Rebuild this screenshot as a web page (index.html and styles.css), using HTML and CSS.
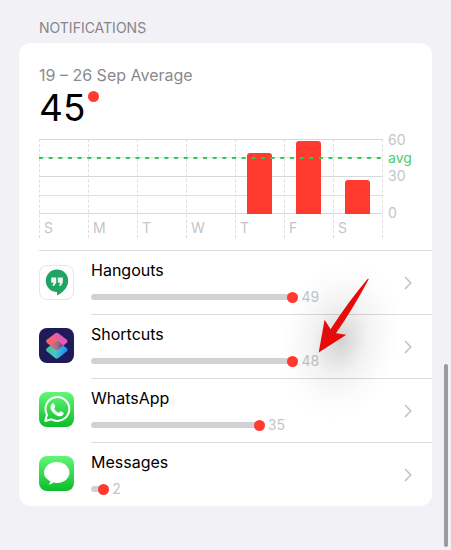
FILE: index.html
```html
<!DOCTYPE html>
<html lang="en">
<head>
    <meta charset="UTF-8">
    <meta name="viewport" content="width=device-width, initial-scale=1.0">
    <title>Notifications</title>
    <link rel="stylesheet" href="styles.css">
</head>
<body>
    <main class="page">
        <h2 class="section-title">NOTIFICATIONS</h2>
        <section class="card">
            <div class="summary">
                <p class="period">19 – 26 Sep Average</p>
                <p class="average">45<span class="dot"></span></p>
                <div class="chart">
                    <div class="plot">
                        <div class="day"><div class="bar-area"></div><span>S</span></div>
                        <div class="day"><div class="bar-area"></div><span>M</span></div>
                        <div class="day"><div class="bar-area"></div><span>T</span></div>
                        <div class="day"><div class="bar-area"></div><span>W</span></div>
                        <div class="day"><div class="bar-area"><div class="bar" style="height: 82%"></div></div><span>T</span></div>
                        <div class="day"><div class="bar-area"><div class="bar" style="height: 97%"></div></div><span>F</span></div>
                        <div class="day"><div class="bar-area"><div class="bar" style="height: 46%"></div></div><span>S</span></div>
                        <svg class="avg-line"><line x1="0" y1="1" x2="100%" y2="1" stroke="#34c759" stroke-width="2" stroke-dasharray="4 5.65"/></svg>
                    </div>
                    <div class="axis">
                        <span>60</span>
                        <span class="avg">avg</span>
                        <span>30</span>
                        <span class="zero">0</span>
                    </div>
                </div>
            </div>

            <div class="apps">
                <a class="app" href="#">
                    <svg class="icon" viewBox="0 0 35 35">
                        <rect x=".5" y=".5" width="34" height="34" rx="7.5" fill="#fff" stroke="#e6e6e8"/>
                        <path d="M18 4.5a11.2 11.2 0 0 1 11.2 11.3C29.2 22 24.5 27.5 18 30.500V27A11.25 11.25 0 0 1 18 4.500Z" fill="#1fa463"/>
                        <path d="M12.200 12.500h5v5.200l-2 3h-2l1.500-3h-2.500zM18.800 12.500h5v5.200l-2 3h-2l1.500-3h-2.500z" fill="#eef5f0"/>
                    </svg>
                    <div class="details">
                        <div class="info">
                            <span class="name">Hangouts</span>
                            <div class="usage"><div class="track" style="width: 68%"></div><span>49</span></div>
                        </div>
                        <svg class="chevron" viewBox="0 0 8 14"><path d="M1.500 1.500 6.800 7l-5.300 5.500"/></svg>
                    </div>
                </a>
                <a class="app" href="#">
                    <svg class="icon" viewBox="0 0 35 35">
                        <defs>
                            <linearGradient id="pink" x1="0" y1=".8" x2="1" y2=".2">
                                <stop offset="0" stop-color="#ff6450"/>
                                <stop offset=".45" stop-color="#f8617f"/>
                                <stop offset="1" stop-color="#c65ae0"/>
                            </linearGradient>
                            <linearGradient id="blue" x1="0" y1=".4" x2="1" y2=".6">
                                <stop offset="0" stop-color="#3fc08a"/>
                                <stop offset=".45" stop-color="#48c9c4"/>
                                <stop offset="1" stop-color="#1f84fb"/>
                            </linearGradient>
                            <linearGradient id="overlap" x1="0" y1="0" x2="1" y2="0">
                                <stop offset="0" stop-color="#ee6560"/>
                                <stop offset=".5" stop-color="#a0708f"/>
                                <stop offset="1" stop-color="#4a4a9c"/>
                            </linearGradient>
                        </defs>
                        <rect width="35" height="35" rx="8" fill="#1e1b58"/>
                        <path d="M16 13.700q1.800-1 3.600 0l8.200 6.600q1.700 1.500 0 3l-8.200 6.700q-1.800 1.300-3.600 0l-8.200-6.700q-1.700-1.500 0-3z" fill="url(#blue)"/>
                        <path d="M16 5.500q1.800-1.300 3.600 0l8.200 6.300q1.700 1.500 0 3l-8.200 6.700q-1.800 1.300-3.600 0l-8.200-6.700q-1.700-1.500 0-3z" fill="url(#pink)"/>
                        <path d="M16 13.700q1.800-1 3.600 0l4.700 3.900-4.700 3.900q-1.800 1.300-3.600 0l-4.700-3.900z" fill="url(#overlap)"/>
                    </svg>
                    <div class="details">
                        <div class="info">
                            <span class="name">Shortcuts</span>
                            <div class="usage"><div class="track" style="width: 68%"></div><span>48</span></div>
                        </div>
                        <svg class="chevron" viewBox="0 0 8 14"><path d="M1.500 1.500 6.800 7l-5.300 5.500"/></svg>
                    </div>
                </a>
                <a class="app" href="#">
                    <svg class="icon" viewBox="0 0 35 35">
                        <defs>
                            <linearGradient id="green" x1="0" y1="0" x2="0" y2="1">
                                <stop offset="0" stop-color="#62f777"/>
                                <stop offset="1" stop-color="#0dbc29"/>
                            </linearGradient>
                        </defs>
                        <rect width="35" height="35" rx="8" fill="url(#green)"/>
                        <path d="M6.200 29 8 22.700A11.900 11.900 0 1 1 12.600 27.300z" fill="none" stroke="#fff" stroke-width="2" stroke-linejoin="round"/>
                        <path d="M13.300 11.600c.7-.7 1.500-.5 1.900.3l1.100 2.600c.3.700-.9 1.600-1.200 2.100.9 2 2.500 3.300 4.600 4.200.5-.4 1.200-1.700 1.800-1.600l2.800 1.400c.6.400.2 1.900-.5 2.600-1.500 1.400-3.300 1.300-5.400.5-3.100-1.300-5.500-3.800-6.500-6.300-.8-2.200-.3-4.300 1.400-5.800z" fill="#fff"/>
                    </svg>
                    <div class="details">
                        <div class="info">
                            <span class="name">WhatsApp</span>
                            <div class="usage"><div class="track" style="width: 57%"></div><span>35</span></div>
                        </div>
                        <svg class="chevron" viewBox="0 0 8 14"><path d="M1.500 1.500 6.800 7l-5.300 5.500"/></svg>
                    </div>
                </a>
                <a class="app" href="#">
                    <svg class="icon" viewBox="0 0 35 35">
                        <rect width="35" height="35" rx="8" fill="url(#green)"/>
                        <path d="M17.800 6C25 6 30.500 10.700 30.500 16.500S25 27 17.800 27q-1.700 0-3.300-.4Q12.200 28.700 9.500 28.700 11.200 27.300 11.400 25.200C7.500 23.300 5 20.200 5 16.500 5 10.700 10.700 6 17.800 6z" fill="#fff"/>
                    </svg>
                    <div class="details">
                        <div class="info">
                            <span class="name">Messages</span>
                            <div class="usage"><div class="track" style="width: 6%"></div><span>2</span></div>
                        </div>
                        <svg class="chevron" viewBox="0 0 8 14"><path d="M1.500 1.500 6.800 7l-5.300 5.500"/></svg>
                    </div>
                </a>
            </div>

            <svg class="pointer" viewBox="0 0 140 170">
                <defs>
                    <radialGradient id="shade">
                        <stop offset="0" stop-color="#000" stop-opacity=".18"/>
                        <stop offset=".2" stop-color="#000" stop-opacity=".12"/>
                        <stop offset=".45" stop-color="#000" stop-opacity=".05"/>
                        <stop offset=".75" stop-color="#000" stop-opacity=".015"/>
                        <stop offset="1" stop-color="#000" stop-opacity="0"/>
                    </radialGradient>
                </defs>
                <ellipse cx="60" cy="90" rx="60" ry="82" transform="rotate(14 60 90)" fill="url(#shade)"/>
                <path d="M88 28.500 88.700 29.200Q74 57 56 83.300L66.300 84.700 38.700 102.500 44.600 69.800 50.600 79.300Q68 52 88 28.500z" fill="#e60a0a"/>
            </svg>
        </section>
    </main>
    <div class="scrollbar"></div>
</body>
</html>
```
FILE: styles.css
```css
* {
    box-sizing: border-box;
}

body {
    margin: 0;
    background-color: #f2f1f6;
    color: #000;
    font-family: Inter, "Liberation Sans", sans-serif;
}

.page {
    padding: 18px 19px 44px;
}

.section-title {
    margin: 0 0 5px;
    padding-left: 20px;
    font-size: 14px;
    font-weight: 400;
    line-height: 20px;
    color: #858589;
}

.card {
    position: relative;
    background-color: #fff;
    border-radius: 12px;
}

.summary {
    padding: 22px 20px 12px;
}

.period {
    margin: 0;
    font-size: 16px;
    line-height: 20px;
    color: #8a8a8e;
}

.average {
    display: flex;
    gap: 3px;
    margin: 0 0 8px;
    font-size: 37px;
    line-height: 46px;
}

.dot {
    width: 11px;
    height: 11px;
    margin-top: 6px;
    border-radius: 50%;
    background-color: #ff3b30;
}

/* weekly chart */
.chart {
    display: flex;
    gap: 5px;
}

.plot {
    position: relative;
    display: flex;
    flex: 1;
    height: 99px;
    border-right: 1px dashed #dedee0;
}

.day {
    display: flex;
    flex: 1;
    flex-direction: column;
    border-left: 1px dashed #dedee0;
    font-size: 14px;
    line-height: 20px;
    color: #c5c5c7;
}

.day span {
    padding: 4px 0 0 4px;
}

.bar-area {
    display: flex;
    align-items: flex-end;
    justify-content: center;
    height: 75px;
    margin-left: -1px;
    background:
        linear-gradient(#d8d8da, #d8d8da) 0 0 / 100% 1px no-repeat,
        linear-gradient(#e5e5e7, #e5e5e7) 0 18px / 100% 1px no-repeat,
        linear-gradient(#d8d8da, #d8d8da) 0 37px / 100% 1px no-repeat,
        linear-gradient(#e0e0e2, #e0e0e2) 0 56px / 100% 1px no-repeat,
        linear-gradient(#d8d8da, #d8d8da) 0 74px / 100% 1px no-repeat;
}

.bar {
    width: 25px;
    border-radius: 3px 3px 0 0;
    background-color: #ff3b30;
}

.avg-line {
    position: absolute;
    top: 18px;
    left: 0;
    width: 100%;
    height: 2px;
}

.axis {
    display: flex;
    flex-direction: column;
    width: 24px;
    margin-top: -8px;
    font-size: 14px;
    line-height: 18px;
    color: #c5c5c7;
}

.axis .avg {
    color: #4bcb6b;
}

.axis .zero {
    margin-top: 19px;
}

/* app list */
.apps {
    margin-left: 20px;
    border-top: 1px solid #dcdcde;
}

.app {
    display: flex;
    gap: 17px;
    color: inherit;
    text-decoration: none;
}

.icon {
    width: 35px;
    height: 35px;
    margin-top: 14px;
}

.details {
    display: flex;
    flex: 1;
    align-items: center;
    gap: 8px;
    padding-right: 20px;
    border-top: 1px solid #dcdcde;
}

.app:first-child .details {
    border-top: none;
}

.info {
    flex: 1;
    height: 63px;
    padding-top: 9px;
}

.name {
    display: block;
    font-size: 16px;
    line-height: 20px;
}

.usage {
    display: flex;
    align-items: center;
    gap: 3px;
    margin-top: 8px;
    font-size: 14px;
    line-height: 18px;
    color: #c5c5c7;
}

.track {
    display: flex;
    align-items: center;
    justify-content: flex-end;
    height: 6px;
    border-radius: 3px;
    background-color: #d1d1d6;
}

.track::after {
    content: "";
    width: 11px;
    height: 11px;
    border-radius: 50%;
    background-color: #ff3b30;
}

.chevron {
    width: 8px;
    height: 14px;
    fill: none;
    stroke: #c3c3c6;
    stroke-width: 1.7;
    stroke-linecap: round;
    stroke-linejoin: round;
}

/* arrow lying over the list */
.pointer {
    position: absolute;
    top: 207px;
    right: 12px;
    width: 140px;
    height: 170px;
    overflow: visible;
    pointer-events: none;
}

.scrollbar {
    position: fixed;
    top: 364px;
    right: 3px;
    bottom: 3px;
    width: 4px;
    border-radius: 2px;
    background-color: #9b9b9f;
}
```
